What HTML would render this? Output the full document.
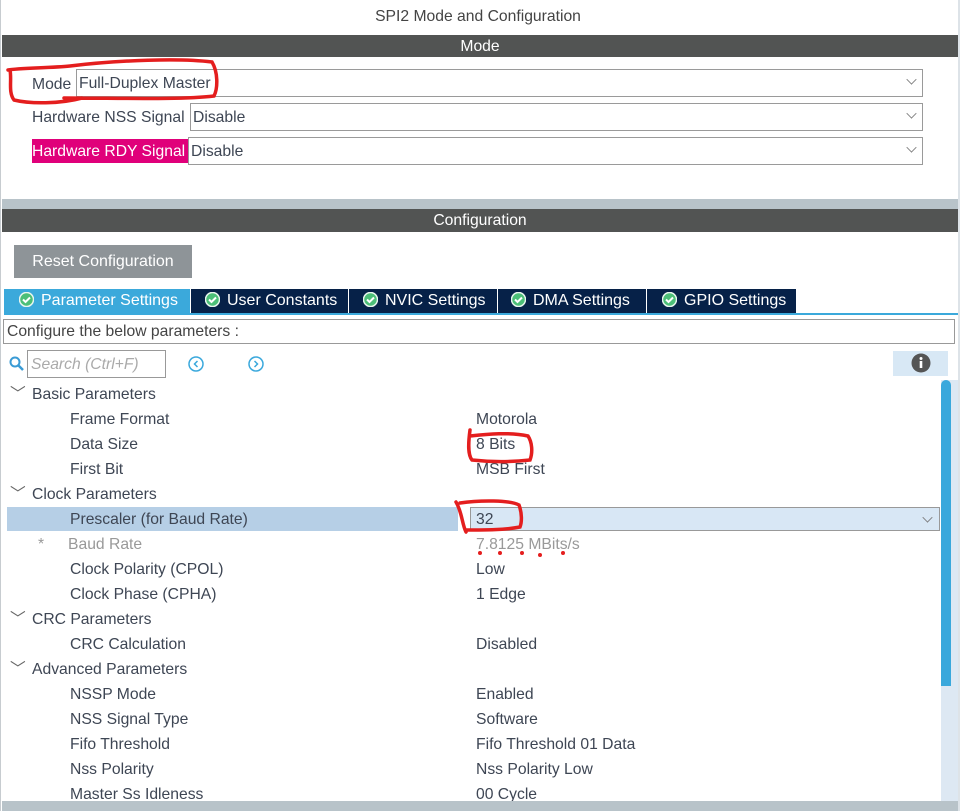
<!DOCTYPE html>
<html><head><style>
*{margin:0;padding:0;box-sizing:border-box}
body{width:960px;height:811px;background:#fff;font-family:"Liberation Sans",sans-serif;font-size:15.7px;color:#3e4654;position:relative;overflow:hidden}
.a{position:absolute;white-space:nowrap}
.bar{position:absolute;left:2px;width:956px;background:#525453;color:#fff;text-align:center;font-size:15.7px}
.sel{position:absolute;border:1px solid #9a9a9a;background:#fff;height:28px;line-height:28px;padding-left:2px}
.chev{position:absolute;right:6px;width:9px;height:9px;border-right:1.5px solid #777;border-bottom:1.5px solid #777;transform:rotate(45deg) scale(.8,.8);top:5px}
.tab{position:absolute;top:289px;height:24px;line-height:24px;background:#062148;color:#fff;font-size:16px}
.tab svg{vertical-align:-2px;margin-right:7px}
.r{position:absolute;height:25px;line-height:26px}
</style></head><body>
<div class="a" style="left:0;top:0;width:1px;height:811px;background:#c7ccd0"></div>
<div class="a" style="left:958px;top:0;width:2px;height:811px;background:#dde3e8"></div>
<div class="a" style="left:0;top:8px;width:956px;text-align:center;color:#444">SPI2 Mode and Configuration</div>
<div class="bar" style="top:35px;height:22px;line-height:23px">Mode</div>
<div class="a" style="left:32px;top:76px">Mode</div>
<div class="sel" style="left:76px;top:69px;width:847px">Full-Duplex Master<div class="chev"></div></div>
<div class="a" style="left:32px;top:109px">Hardware NSS Signal</div>
<div class="sel" style="left:190px;top:103px;width:733px">Disable<div class="chev"></div></div>
<div class="a" style="left:32px;top:139px;background:#e0007a;color:#fff;height:24px;line-height:25px;width:156px">Hardware RDY Signal</div>
<div class="sel" style="left:188px;top:137px;width:735px">Disable<div class="chev"></div></div>
<div class="a" style="left:2px;top:199px;width:956px;height:10px;background:#b8c3c9"></div>
<div class="bar" style="top:209px;height:23px;line-height:24px">Configuration</div>
<div class="a" style="left:14px;top:245px;width:178px;height:33px;background:#8e9498;color:#fff;line-height:34px;text-align:center;font-size:16px">Reset Configuration</div>
<div class="tab" style="left:4px;width:186px;background:#3ba9db;padding-left:15px"><svg width="15" height="15"><circle cx="7.5" cy="7.5" r="7" fill="#4cbf78" stroke="#e8f6ee" stroke-width="1.5"/><path d="M4 7.5l2.5 2.5 4.5-4.5" fill="none" stroke="#fff" stroke-width="2"/></svg>Parameter Settings</div>
<div class="tab" style="left:191px;width:157px;padding-left:14px"><svg width="15" height="15"><circle cx="7.5" cy="7.5" r="7" fill="#4cbf78" stroke="#e8f6ee" stroke-width="1.5"/><path d="M4 7.5l2.5 2.5 4.5-4.5" fill="none" stroke="#fff" stroke-width="2"/></svg>User Constants</div>
<div class="tab" style="left:349px;width:148px;padding-left:14px"><svg width="15" height="15"><circle cx="7.5" cy="7.5" r="7" fill="#4cbf78" stroke="#e8f6ee" stroke-width="1.5"/><path d="M4 7.5l2.5 2.5 4.5-4.5" fill="none" stroke="#fff" stroke-width="2"/></svg>NVIC Settings</div>
<div class="tab" style="left:498px;width:148px;padding-left:13px"><svg width="15" height="15"><circle cx="7.5" cy="7.5" r="7" fill="#4cbf78" stroke="#e8f6ee" stroke-width="1.5"/><path d="M4 7.5l2.5 2.5 4.5-4.5" fill="none" stroke="#fff" stroke-width="2"/></svg>DMA Settings</div>
<div class="tab" style="left:647px;width:149px;padding-left:15px"><svg width="15" height="15"><circle cx="7.5" cy="7.5" r="7" fill="#4cbf78" stroke="#e8f6ee" stroke-width="1.5"/><path d="M4 7.5l2.5 2.5 4.5-4.5" fill="none" stroke="#fff" stroke-width="2"/></svg>GPIO Settings</div>
<div class="a" style="left:4px;top:313px;width:954px;height:2px;background:#3ba9db"></div>
<div class="a" style="left:3px;top:319px;width:952px;height:25px;border:1px solid #999;line-height:24px;padding-left:3px;color:#444">Configure the below parameters :</div>
<svg class="a" style="left:9px;top:356px" width="16" height="16"><circle cx="6" cy="6" r="4.5" fill="none" stroke="#3a9bd5" stroke-width="2"/><path d="M9 9l5 5" stroke="#3a9bd5" stroke-width="2.5"/></svg>
<div class="a" style="left:27px;top:350px;width:139px;height:28px;border:1px solid #999;line-height:27px;padding-left:3px;color:#aaa;font-style:italic">Search (Ctrl+F)</div>
<svg class="a" style="left:187px;top:355px" width="18" height="18"><circle cx="9" cy="9" r="7" fill="none" stroke="#3aa8dc" stroke-width="1.5"/><path d="M10.5 6l-3 3 3 3" fill="none" stroke="#3aa8dc" stroke-width="1.5"/></svg>
<svg class="a" style="left:247px;top:355px" width="18" height="18"><circle cx="9" cy="9" r="7" fill="none" stroke="#3aa8dc" stroke-width="1.5"/><path d="M7.5 6l3 3-3 3" fill="none" stroke="#3aa8dc" stroke-width="1.5"/></svg>
<div class="a" style="left:893px;top:351px;width:55px;height:25px;background:#d8e8f5"></div>
<svg class="a" style="left:911px;top:353px" width="20" height="20"><circle cx="10" cy="10" r="9.5" fill="#555"/><rect x="8.7" y="8" width="2.6" height="7" fill="#fff"/><circle cx="10" cy="5.5" r="1.5" fill="#fff"/></svg>
<div class="a" style="left:941px;top:380px;width:17px;height:421px;background:#dde8f3"></div>
<div class="a" style="left:941px;top:380px;width:10px;height:306px;background:#3aa8dc;border-radius:5px 5px 0 0"></div>
<div class="a" style="left:7px;top:507px;width:451px;height:24px;background:#b6cfe6"></div>
<div class="a" style="left:470px;top:507px;width:470px;height:24px;background:#d8e7f5;border:1px solid #999;padding-left:5px;line-height:24px">32<div class="chev" style="right:7px"></div></div>
<div class="r" style="left:10px;top:382px;color:#666">﹀</div>
<div class="r" style="left:32px;top:382px">Basic Parameters</div>
<div class="r" style="left:70px;top:407px">Frame Format</div><div class="r" style="left:476px;top:407px">Motorola</div>
<div class="r" style="left:70px;top:432px">Data Size</div><div class="r" style="left:476px;top:432px">8 Bits</div>
<div class="r" style="left:70px;top:457px">First Bit</div><div class="r" style="left:476px;top:457px">MSB First</div>
<div class="r" style="left:10px;top:482px;color:#666">﹀</div>
<div class="r" style="left:32px;top:482px">Clock Parameters</div>
<div class="r" style="left:70px;top:507px">Prescaler (for Baud Rate)</div>
<div class="r" style="left:38px;top:532px;color:#999">*</div><div class="r" style="left:68px;top:532px;color:#999">Baud Rate</div><div class="r" style="left:476px;top:532px;color:#999">7.8125 MBits/s</div>
<div class="r" style="left:70px;top:557px">Clock Polarity (CPOL)</div><div class="r" style="left:476px;top:557px">Low</div>
<div class="r" style="left:70px;top:582px">Clock Phase (CPHA)</div><div class="r" style="left:476px;top:582px">1 Edge</div>
<div class="r" style="left:10px;top:607px;color:#666">﹀</div>
<div class="r" style="left:32px;top:607px">CRC Parameters</div>
<div class="r" style="left:70px;top:632px">CRC Calculation</div><div class="r" style="left:476px;top:632px">Disabled</div>
<div class="r" style="left:10px;top:657px;color:#666">﹀</div>
<div class="r" style="left:32px;top:657px">Advanced Parameters</div>
<div class="r" style="left:70px;top:682px">NSSP Mode</div><div class="r" style="left:476px;top:682px">Enabled</div>
<div class="r" style="left:70px;top:707px">NSS Signal Type</div><div class="r" style="left:476px;top:707px">Software</div>
<div class="r" style="left:70px;top:732px">Fifo Threshold</div><div class="r" style="left:476px;top:732px">Fifo Threshold 01 Data</div>
<div class="r" style="left:70px;top:757px">Nss Polarity</div><div class="r" style="left:476px;top:757px">Nss Polarity Low</div>
<div class="r" style="left:70px;top:782px">Master Ss Idleness</div><div class="r" style="left:476px;top:782px">00 Cycle</div>
<div class="a" style="left:2px;top:801px;width:956px;height:10px;background:#b8c3c9"></div>
<svg class="a" style="left:0;top:0" width="960" height="811" fill="none" stroke="#e41e1e" stroke-width="3.5" stroke-linecap="round">
<path d="M10 70 C12 80 8 92 14 100 C30 104 60 104 82 98 M64 98 C120 98 180 100 214 96 C218 88 218 72 212 62 C180 58 120 60 70 66 C50 68 20 68 8 70"/>
<path d="M470 430 C468 445 468 455 472 460 C490 462 512 462 530 460 C533 452 532 442 528 436 C510 432 488 434 470 436"/>
<path d="M456 502 C462 512 462 524 466 532 M460 503 C480 500 510 500 519 505 C522 513 522 522 520 527 C505 530 485 530 466 530"/>
</svg>
<svg class="a" style="left:0;top:0" width="960" height="811" fill="#e41e1e"><circle cx="480" cy="553" r="2"/><circle cx="500" cy="553" r="2"/><circle cx="522" cy="553" r="2"/><circle cx="540" cy="555" r="2"/><circle cx="563" cy="553" r="2"/></svg>
</body></html>
